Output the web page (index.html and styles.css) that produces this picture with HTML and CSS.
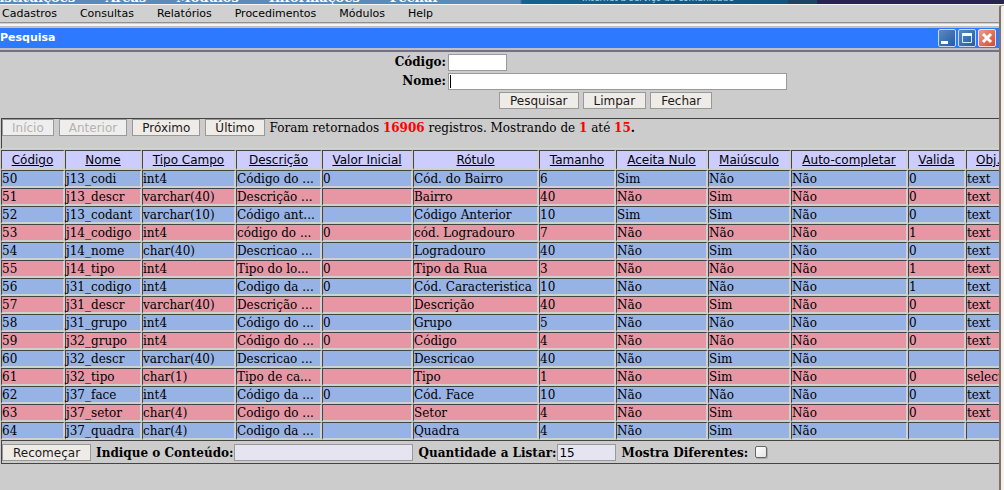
FILE: index.html
```html
<!DOCTYPE html>
<html lang="pt-BR">
<head>
<meta charset="utf-8">
<title>Pesquisa</title>
<link rel="stylesheet" href="styles.css">
</head>
<body>
<header class="top">
  <nav class="modules"><a href="#">Instituições</a><a href="#">Áreas</a><a href="#">Módulos</a><a href="#">Informações</a><a href="#">Fechar</a></nav>
  <span class="slogan">Internet a serviço da comunidade</span>
</header>
<div class="frame">
<div class="main">
<nav class="menu"><a href="#">Cadastros</a><a href="#">Consultas</a><a href="#">Relatórios</a><a href="#">Procedimentos</a><a href="#">Módulos</a><a href="#">Help</a></nav>
<section class="window">
  <div class="titlebar">
    <span class="title">Pesquisa</span>
    <button class="win" aria-label="Minimizar"><svg viewBox="0 0 18 18"><defs><linearGradient id="b" x2="1" y2="1"><stop stop-color="#5d8bc0"/><stop offset="1" stop-color="#2359a5"/></linearGradient></defs><rect x=".5" y=".5" width="17" height="17" rx="1.5" fill="url(#b)" stroke="#c5d7f2"/><path d="M3 12h7v3H3z" fill="#fff"/></svg></button>
    <button class="win" aria-label="Maximizar"><svg viewBox="0 0 18 18"><rect x=".5" y=".5" width="17" height="17" rx="1.5" fill="url(#b)" stroke="#c5d7f2"/><path d="M4.500 5h9v8.500h-9z" fill="none" stroke="#d5e7fb"/><path d="M4 4h10v3H4z" fill="#f4f9ff"/></svg></button>
    <button class="win" aria-label="Fechar janela"><svg viewBox="0 0 18 18"><defs><linearGradient id="r" x2="1" y2="1"><stop stop-color="#e9a08c"/><stop offset="1" stop-color="#d5482a"/></linearGradient></defs><rect x=".5" y=".5" width="17" height="17" rx="1.500" fill="url(#r)" stroke="#f6ded6"/><path d="M5 5l8 8M13 5l-8 8" stroke="#fff" stroke-width="3"/></svg></button>
  </div>
  <div class="content">
    <form class="search">
      <label for="codigo">Código:</label><input id="codigo" class="field short" type="text">
      <label for="nome">Nome:</label><div class="caretbox"><input id="nome" class="field long" type="text"><i class="caret"></i></div>
      <div class="actions"><button type="button" class="btn roomy">Pesquisar</button><button type="button" class="btn roomy">Limpar</button><button type="button" class="btn roomy">Fechar</button></div>
    </form>
    <div class="pager">
      <button class="btn" disabled>Início</button><button class="btn" disabled>Anterior</button><button class="btn">Próximo</button><button class="btn">Último</button>
      <span>Foram retornados <b class="num">16906</b> registros. Mostrando de <b class="num">1</b> até <b class="num">15</b><b>.</b></span>
    </div>
    <table class="grid">
      <colgroup><col class="c1"><col class="c2"><col class="c3"><col class="c4"><col class="c5"><col class="c6"><col class="c2"><col class="c7"><col class="c8"><col class="c9"><col class="c10"><col class="c11"></colgroup>
      <thead><tr><th><a href="#">Código</a></th><th><a href="#">Nome</a></th><th><a href="#">Tipo Campo</a></th><th><a href="#">Descrição</a></th><th><a href="#">Valor Inicial</a></th><th><a href="#">Rótulo</a></th><th><a href="#">Tamanho</a></th><th><a href="#">Aceita Nulo</a></th><th><a href="#">Maiúsculo</a></th><th><a href="#">Auto-completar</a></th><th><a href="#">Valida</a></th><th><a href="#">Obj.</a></th></tr></thead>
      <tbody>
      <tr><td>50</td><td>j13_codi</td><td>int4</td><td>Código do ...</td><td>0</td><td>Cód. do Bairro</td><td>6</td><td>Sim</td><td>Não</td><td>Não</td><td>0</td><td>text</td></tr>
      <tr><td>51</td><td>j13_descr</td><td>varchar(40)</td><td>Descrição ...</td><td></td><td>Bairro</td><td>40</td><td>Não</td><td>Sim</td><td>Não</td><td>0</td><td>text</td></tr>
      <tr><td>52</td><td>j13_codant</td><td>varchar(10)</td><td>Código ant...</td><td></td><td>Código Anterior</td><td>10</td><td>Sim</td><td>Sim</td><td>Não</td><td>0</td><td>text</td></tr>
      <tr><td>53</td><td>j14_codigo</td><td>int4</td><td>código do ...</td><td>0</td><td>cód. Logradouro</td><td>7</td><td>Não</td><td>Não</td><td>Não</td><td>1</td><td>text</td></tr>
      <tr><td>54</td><td>j14_nome</td><td>char(40)</td><td>Descricao ...</td><td></td><td>Logradouro</td><td>40</td><td>Não</td><td>Sim</td><td>Não</td><td>0</td><td>text</td></tr>
      <tr><td>55</td><td>j14_tipo</td><td>int4</td><td>Tipo do lo...</td><td>0</td><td>Tipo da Rua</td><td>3</td><td>Não</td><td>Não</td><td>Não</td><td>1</td><td>text</td></tr>
      <tr><td>56</td><td>j31_codigo</td><td>int4</td><td>Codigo da ...</td><td>0</td><td>Cód. Caracteristica</td><td>10</td><td>Não</td><td>Não</td><td>Não</td><td>1</td><td>text</td></tr>
      <tr><td>57</td><td>j31_descr</td><td>varchar(40)</td><td>Descrição ...</td><td></td><td>Descrição</td><td>40</td><td>Não</td><td>Sim</td><td>Não</td><td>0</td><td>text</td></tr>
      <tr><td>58</td><td>j31_grupo</td><td>int4</td><td>Código do ...</td><td>0</td><td>Grupo</td><td>5</td><td>Não</td><td>Não</td><td>Não</td><td>0</td><td>text</td></tr>
      <tr><td>59</td><td>j32_grupo</td><td>int4</td><td>Código do ...</td><td>0</td><td>Código</td><td>4</td><td>Não</td><td>Não</td><td>Não</td><td>0</td><td>text</td></tr>
      <tr><td>60</td><td>j32_descr</td><td>varchar(40)</td><td>Descricao ...</td><td></td><td>Descricao</td><td>40</td><td>Não</td><td>Sim</td><td>Não</td><td></td><td></td></tr>
      <tr><td>61</td><td>j32_tipo</td><td>char(1)</td><td>Tipo de ca...</td><td></td><td>Tipo</td><td>1</td><td>Não</td><td>Sim</td><td>Não</td><td>0</td><td>select</td></tr>
      <tr><td>62</td><td>j37_face</td><td>int4</td><td>Código da ...</td><td>0</td><td>Cód. Face</td><td>10</td><td>Não</td><td>Não</td><td>Não</td><td>0</td><td>text</td></tr>
      <tr><td>63</td><td>j37_setor</td><td>char(4)</td><td>Codigo do ...</td><td></td><td>Setor</td><td>4</td><td>Não</td><td>Sim</td><td>Não</td><td>0</td><td>text</td></tr>
      <tr><td>64</td><td>j37_quadra</td><td>char(4)</td><td>Codigo da ...</td><td></td><td>Quadra</td><td>4</td><td>Não</td><td>Sim</td><td>Não</td><td></td><td></td></tr>
      </tbody>
    </table>
    <form class="filter">
      <button type="button" class="btn roomy">Recomeçar</button>
      <div class="pair"><label for="conteudo">Indique o Conteúdo:</label><input id="conteudo" class="field soft wide" type="text"></div>
      <div class="pair"><label for="qtd">Quantidade a Listar:</label><input id="qtd" class="field soft short" type="text" value="15"></div>
      <div class="pair"><label for="dif">Mostra Diferentes:</label><input id="dif" class="check" type="checkbox"></div>
    </form>
  </div>
</section>
</div>
<div class="edge"></div>
</div>
</body>
</html>
```
FILE: styles.css
```css
* { box-sizing: border-box; }
body {
  margin: 0;
  height: 100vh;
  display: flex;
  flex-direction: column;
  overflow: hidden;
  background: #ccc;
  color: #000;
  font: 12px/15px "DejaVu Serif", serif;
}
a { color: inherit; text-decoration: none; }
label, b { font-weight: bold; }

.top {
  flex: none;
  height: 4px;
  display: flex;
  align-items: flex-end;
  overflow: hidden;
  color: #fff;
  background: linear-gradient(90deg, #5b8bba 0 520px, #14628e 522px, #11557f 788px, #204264 788px 817px, #29244e 817px);
}
.modules {
  flex: none;
  width: 585px;
  display: flex;
  gap: 30px;
  margin-left: -11px;
  font-size: 13px;
  line-height: 13px;
  font-weight: bold;
}
.slogan { margin-left: 8px; font: 9px/11px "DejaVu Sans", sans-serif; color: #b8d8ea; white-space: nowrap; }

.frame { flex: 1; min-height: 0; display: flex; border-top: 1px solid #f4f4f4; }
.main { flex: 1; min-width: 0; display: flex; flex-direction: column; }
.edge { flex: none; width: 5px; background: #f4f1ed; border-left: 2px solid #7d736b; border-top: 1px solid #aaa; border-top-left-radius: 3px; }

.menu {
  display: flex;
  gap: 23px;
  padding: 0 2px;
  height: 18px;
  background: #d0d0d0;
  border-bottom: 1px solid #909090;
  font: 11px/17px "DejaVu Sans", sans-serif;
}
.window { flex: 1; min-height: 0; border-top: 1px solid #d0d0d0; background: #ccc; }
.titlebar {
  display: flex;
  align-items: center;
  gap: 2px;
  height: 28px;
  padding-right: 3px;
  border-top: 2px solid #f4f4f4;
  border-bottom: 2px solid #716e8e;
  background: linear-gradient(#c0c0c0 0 2px, #2d79ff 2px 22px, #c0c0c0 22px);
}
.title { flex: 1; color: #fff; font: bold 11px/20px "DejaVu Sans", sans-serif; }
.win { width: 18px; height: 18px; padding: 0; border: 0; background: none; }
.win svg { display: block; }

.content { overflow: hidden; }
.search {
  display: grid;
  grid-template-columns: 446px auto;
  gap: 2px;
  padding: 2px 0 9px;
  line-height: 17px;
}
.search label { text-align: right; }
.actions { grid-column: 1 / -1; display: flex; gap: 4px; padding-left: 499px; }
.caretbox { position: relative; }
.caret { position: absolute; left: 2px; top: 2px; width: 1px; height: 13px; background: #000; }

.field {
  display: block;
  height: 17px;
  margin: 0;
  padding: 0 1px;
  border: 1px solid #999;
  background: #fff;
  color: #000;
  font: 12px/15px "DejaVu Sans", sans-serif;
}
.short { width: 59px; }
.long { width: 339px; }
.wide { width: 179px; }
.soft { background: #e6e4f1; }
.btn {
  height: 17px;
  padding: 1px 9px 0;
  border: 1px solid #999;
  background: #efebe7;
  color: #1a1a1a;
  font: 12px/15px "DejaVu Sans", sans-serif;
}
.btn:disabled { background: #eee; color: #b5b2ae; }
.btn.roomy { padding: 1px 10px 0; }

.pager {
  display: flex;
  align-items: flex-start;
  gap: 5px;
  height: 31px;
  margin-left: 1px;
  border-top: 1px solid #444;
  border-left: 1px solid #444;
  border-bottom: 1px solid #d4d4d4;
  line-height: 19px;
  white-space: nowrap;
}
.num { color: #f00; }

.grid {
  table-layout: fixed;
  width: 1045px;
  margin: 1px 0 0 1px;
  border-collapse: separate;
  border-spacing: 0;
}
.c1 { width: 64px; }
.c2 { width: 77px; }
.c3 { width: 94px; }
.c4 { width: 86px; }
.c5 { width: 91px; }
.c6 { width: 126px; }
.c7 { width: 92px; }
.c8 { width: 83px; }
.c9 { width: 117px; }
.c10 { width: 58px; }
.c11 { width: 80px; }
.grid th, .grid td {
  height: 18px;
  padding: 1px 0 0;
  border: solid #d0d0d0;
  border-width: 1px 2px 2px 1px;
  border-top-color: #444;
  border-left-color: #444;
  text-align: left;
  line-height: 14px;
  white-space: nowrap;
}
.grid th {
  height: 20px;
  background: #ccf;
  text-align: center;
  font: 12px/16px "DejaVu Sans", sans-serif;
}
.grid th:last-child { padding-left: 9px; text-align: left; }
.grid th a { text-decoration: underline; }
.grid tbody tr:nth-child(odd) { background: #97b3e6; }
.grid tbody tr:nth-child(even) { background: #e796a4; }

.filter {
  display: flex;
  gap: 5px;
  margin-left: 1px;
  padding-top: 3px;
  height: 24px;
  border-top: 1px solid #444;
  border-left: 1px solid #444;
  border-bottom: 1px solid #444;
  line-height: 18px;
  white-space: nowrap;
}
.pair { display: flex; }
.pair label { padding-right: 1px; }
.check {
  appearance: none;
  width: 12px;
  height: 12px;
  margin: 2px 0 0 6px;
  border: 1px solid #666;
  border-radius: 2px;
  background: linear-gradient(135deg, #fff, #e4e4e4);
  box-shadow: 1px 1px 0 #aaa;
}
```
